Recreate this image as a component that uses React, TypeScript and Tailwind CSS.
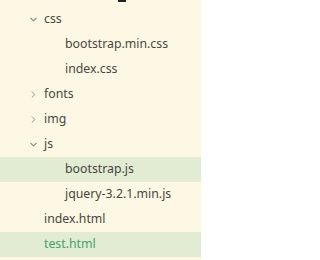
import { ChevronDown, ChevronRight } from "lucide-react"

interface Node {
  name: string
  depth: 0 | 1
  folder?: "open" | "closed"
  selected?: boolean
  active?: boolean
}

const nodes: Node[] = [
  { name: "css", depth: 0, folder: "open" },
  { name: "bootstrap.min.css", depth: 1 },
  { name: "index.css", depth: 1 },
  { name: "fonts", depth: 0, folder: "closed" },
  { name: "img", depth: 0, folder: "closed" },
  { name: "js", depth: 0, folder: "open" },
  { name: "bootstrap.js", depth: 1, selected: true },
  { name: "jquery-3.2.1.min.js", depth: 1 },
  { name: "index.html", depth: 0 },
  { name: "test.html", depth: 0, selected: true, active: true },
]

export default function App() {
  return (
    <div
      className="relative w-[201px] h-[260px] overflow-hidden bg-[#fdf8e4] pt-[7px] text-[12.3px] text-[#4a4642]"
      style={{ fontFamily: '"Noto Sans", "Liberation Sans", sans-serif' }}
    >
      {/* scrollbar tip peeking at the top */}
      <div className="absolute left-[118px] top-0 h-[2px] w-[8px] bg-[#222]" />

      {nodes.map((node) => (
        <div
          key={node.name}
          className={`flex h-[25px] items-center ${node.selected ? "bg-[#e1ecd2]" : ""} ${
            node.depth === 1 ? "pl-[65px]" : "pl-[28px]"
          }`}
        >
          {node.depth === 0 && (
            <span className="flex w-[16px] items-center text-[#8a8a8a]">
              {node.folder === "open" && <ChevronDown size={11} strokeWidth={2.5} />}
              {node.folder === "closed" && <ChevronRight size={11} strokeWidth={2} />}
            </span>
          )}
          <span className={node.active ? "text-[#47a369]" : ""}>{node.name}</span>
        </div>
      ))}
    </div>
  )
}
